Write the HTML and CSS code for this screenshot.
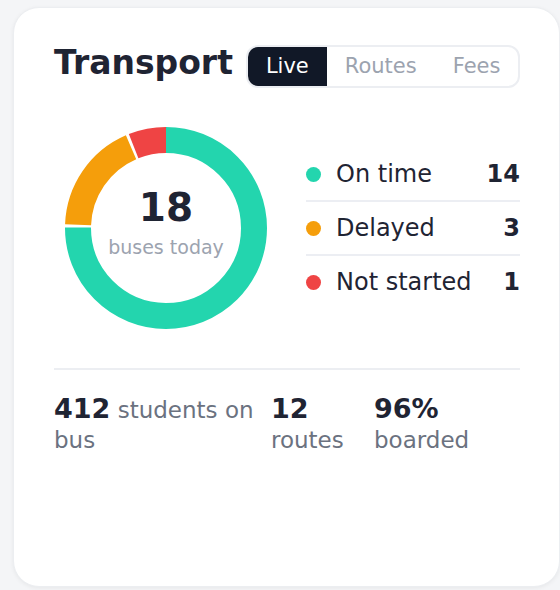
FILE: index.html
```html
<!DOCTYPE html>
<html>
<head>
<meta charset="utf-8">
<link rel="stylesheet" href="styles.css">
</head>
<body>
<div class="card">
  <div class="header">
    <h1 class="title">Transport</h1>
    <div class="seg">
      <span class="seg-btn active">Live</span>
      <span class="seg-btn">Routes</span>
      <span class="seg-btn">Fees</span>
    </div>
  </div>
  <div class="main">
    <div class="donut">
      <svg width="224" height="224" viewBox="0 0 224 224">
        <g fill="none" stroke-width="26">
          <path d="M112 24 A88 88 0 1 1 24.00 111.54" stroke="#23d5ae"/>
          <path d="M24.06 108.78 A88 88 0 0 1 77.05 31.24" stroke="#f59e0b"/>
          <path d="M79.61 30.18 A88 88 0 0 1 112 24" stroke="#ef4444"/>
        </g>
      </svg>
      <div class="donut-center">
        <div class="donut-num">18</div>
        <div class="donut-label">buses today</div>
      </div>
    </div>
    <ul class="legend">
      <li class="legend-row"><span class="dot dot-green"></span><span class="legend-label">On time</span><span class="legend-num">14</span></li>
      <li class="legend-row"><span class="dot dot-orange"></span><span class="legend-label">Delayed</span><span class="legend-num">3</span></li>
      <li class="legend-row"><span class="dot dot-red"></span><span class="legend-label">Not started</span><span class="legend-num">1</span></li>
    </ul>
  </div>
  <div class="stats">
    <div class="stat stat-a"><b>412</b> students on bus</div>
    <div class="stat stat-b"><b>12</b> routes</div>
    <div class="stat stat-c"><b>96%</b> boarded</div>
  </div>
</div>
</body>
</html>
```
FILE: styles.css
```css
html, body {
  margin: 0;
  padding: 0;
}
body {
  background: #f4f5f7;
  font-family: "DejaVu Sans", Verdana, sans-serif;
  color: #1f2433;
  width: 560px;
  height: 590px;
  overflow: hidden;
}
.card {
  box-sizing: border-box;
  margin: 7px 0 0 13px;
  width: 547px;
  height: 580px;
  background: #fff;
  border: 1px solid #eceef1;
  border-radius: 26px;
  box-shadow: 0 1px 4px rgba(0,0,0,0.06);
  padding: 35px 39px 0 40px;
}
.header {
  display: flex;
  align-items: center;
  gap: 13px;
}
.title {
  margin: 0 0 6px 0;
  font-size: 33px;
  font-weight: bold;
  line-height: 40px;
  color: #1f2433;
}
.seg {
  display: flex;
  border: 2px solid #eceef2;
  border-radius: 12px;
  overflow: hidden;
}
.seg-btn {
  font-size: 21px;
  line-height: 23px;
  padding: 8px 18px;
  color: #9ca3af;
}
.seg-btn.active {
  background: #111827;
  color: #fff;
}
.main {
  display: flex;
  align-items: center;
  margin-top: 27px;
}
.donut {
  position: relative;
  width: 224px;
  height: 224px;
  flex: none;
}
.donut svg {
  display: block;
}
.donut-center {
  position: absolute;
  inset: 0;
  display: flex;
  flex-direction: column;
  align-items: center;
  justify-content: center;
  padding-bottom: 12px;
  box-sizing: border-box;
}
.donut-num {
  font-size: 39px;
  font-weight: bold;
  line-height: 44px;
  color: #1f2433;
}
.donut-label {
  margin-top: 5px;
  font-size: 19px;
  line-height: 24px;
  color: #9ca3af;
}
.legend {
  list-style: none;
  margin: 0 0 0 28px;
  padding: 0;
  flex: 1;
}
.legend-row {
  display: flex;
  align-items: center;
  padding: 13px 0;
  line-height: 26px;
  font-size: 24px;
}
.legend-row + .legend-row {
  border-top: 2px solid #eceef3;
}
.dot {
  width: 15px;
  height: 15px;
  border-radius: 50%;
  margin-right: 15px;
  flex: none;
}
.dot-green { background: #23d5ae; }
.dot-orange { background: #f59e0b; }
.dot-red { background: #ef4444; }
.legend-label {
  flex: 1;
  color: #1f2433;
}
.legend-num {
  font-weight: bold;
  color: #1f2433;
}
.stats {
  display: flex;
  gap: 16px;
  margin-top: 28px;
  border-top: 2px solid #eceef2;
  padding-top: 24px;
}
.stat {
  font-size: 23px;
  line-height: 30px;
  color: #6b7280;
}
.stat b {
  font-size: 27px;
  color: #1f2433;
}
.stat-a { flex: 0 0 201px; }
.stat-b { flex: 0 0 87px; }
.stat-c { flex: 1; }
```
